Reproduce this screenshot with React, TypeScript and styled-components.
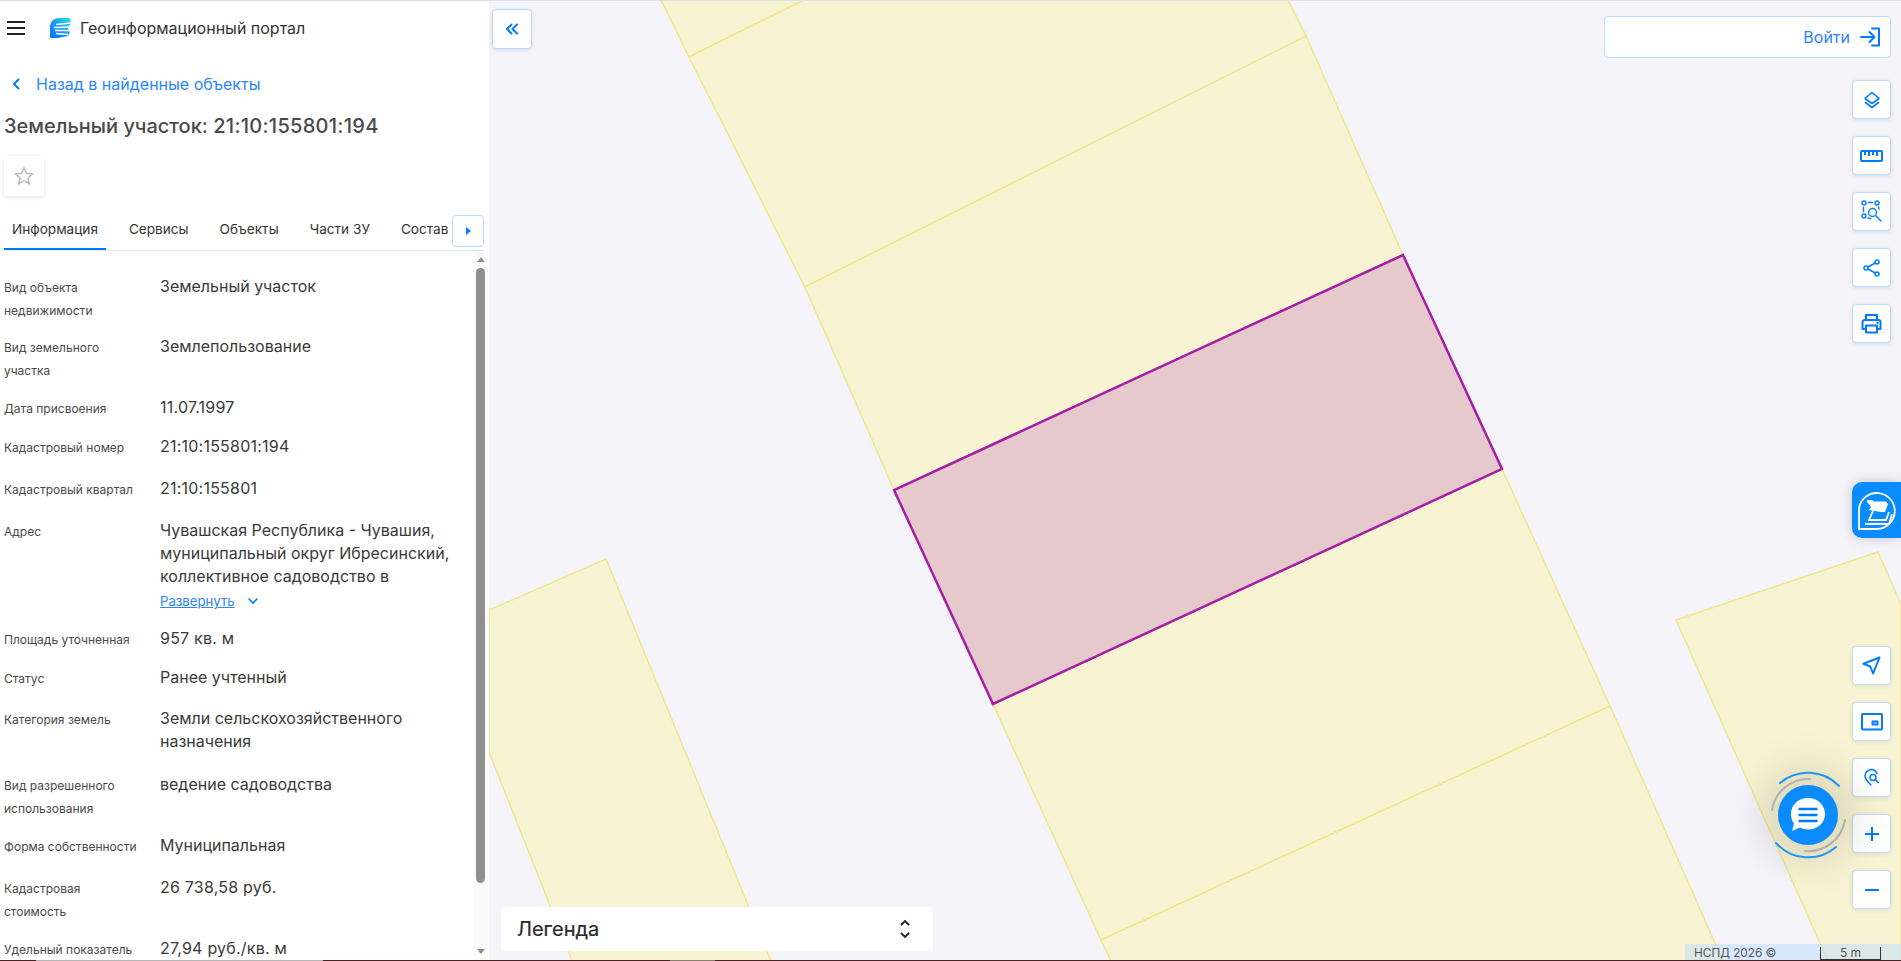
import React from "react";
import styled, { createGlobalStyle } from "styled-components";

const BLUE = "#007bff";

const GlobalStyle = createGlobalStyle`
  html, body, #root {
    margin: 0;
    height: 100%;
  }
  body {
    font-family: Inter, "Noto Sans", sans-serif;
    background: #f5f4fb;
    overflow: hidden;
  }
`;

const Page = styled.div`
  position: relative;
  display: flex;
  width: 1901px;
  height: 961px;
  border-top: 1px solid #dfdfe6;
  box-sizing: border-box;
  overflow: hidden;
`;

const BottomEdge = styled.div`
  position: absolute;
  left: 0;
  right: 0;
  bottom: 0;
  height: 1px;
  z-index: 5;
  background: linear-gradient(
    to right,
    #4a2020 0 36px,
    #b5b5b5 36px 323px,
    #4a2020 323px 670px,
    #8b7d70 670px 715px,
    #4a2020 715px
  );
`;

const Panel = styled.aside`
  width: 489px;
  flex: none;
  display: flex;
  flex-direction: column;
  background: #fff;
`;

const Header = styled.header`
  display: flex;
  align-items: center;
  height: 54px;
  padding: 0 0 0 7px;
  flex: none;
`;

const Burger = styled.div`
  width: 18px;
  height: 14px;
  border-top: 2px solid #222;
  border-bottom: 2px solid #222;
  position: relative;
  box-sizing: border-box;
  margin-right: 24px;
  &::after {
    content: "";
    position: absolute;
    left: 0;
    right: 0;
    top: 4px;
    height: 2px;
    background: #222;
  }
`;

const PortalName = styled.span`
  margin-left: 8px;
  font-size: 16px;
  color: #333;
`;

const BackLink = styled.a`
  display: flex;
  align-items: center;
  height: 20px;
  margin: 19px 0 0 12px;
  gap: 16px;
  font-size: 16px;
  color: #2b85ff;
`;

const Title = styled.h1`
  margin: 20px 0 0 4px;
  font-size: 20px;
  line-height: 24px;
  font-weight: 500;
  color: #4a4a4a;
  white-space: nowrap;
`;

const TitleNumber = styled.span`
  letter-spacing: 0.28px;
`;

const StarButton = styled.div`
  width: 40px;
  height: 40px;
  margin: 18px 0 0 4px;
  display: flex;
  align-items: center;
  justify-content: center;
  border-radius: 4px;
  box-shadow: 0 1px 5px rgba(0, 0, 0, 0.1);
`;

const Tabs = styled.nav`
  position: relative;
  flex: none;
  display: flex;
  gap: 15px;
  height: 40px;
  margin: 14px 5px 0 4px;
  border-bottom: 1px solid #e6e6ea;
`;

const Tab = styled.div<{ $active?: boolean }>`
  flex: none;
  height: 40px;
  box-sizing: border-box;
  padding: 10px 8px 0;
  font-size: 13.6px;
  line-height: 18px;
  color: #333;
  white-space: nowrap;
  border-bottom: 2px solid ${({ $active }) => ($active ? BLUE : "transparent")};
`;

const TabArrow = styled.div`
  position: absolute;
  right: 0;
  top: 5px;
  width: 32px;
  height: 32px;
  box-sizing: border-box;
  display: flex;
  align-items: center;
  justify-content: center;
  background: #fff;
  border: 1px solid #bcdcff;
  border-radius: 4px;
`;

const TabArrowGlyph = styled.div`
  width: 0;
  height: 0;
  border-left: 5px solid ${BLUE};
  border-top: 4px solid transparent;
  border-bottom: 4px solid transparent;
`;

const Body = styled.div`
  flex: 1;
  min-height: 0;
  display: flex;
`;

const List = styled.div`
  flex: 1;
  min-width: 0;
  overflow: hidden;
  padding: 26px 0 0 4px;
`;

const Row = styled.div<{ $h: number }>`
  display: grid;
  grid-template-columns: 156px 1fr;
  height: ${({ $h }) => $h}px;
`;

const Label = styled.div`
  max-width: 133px;
  font-size: 12px;
  line-height: 22.5px;
  color: #4a4a4a;
`;

const Value = styled.div<{ $num?: boolean }>`
  margin-top: -2px;
  padding-right: 16px;
  font-size: 16px;
  line-height: 23px;
  letter-spacing: ${({ $num }) => ($num ? "0.22px" : "normal")};
  color: #3a3a3a;
`;

const Expand = styled.div`
  display: flex;
  align-items: center;
  gap: 13px;
  margin-top: 3px;
`;

const ExpandLink = styled.a`
  font-size: 13.2px;
  line-height: 20px;
  color: #2b85ff;
  text-decoration: underline;
`;

const ScrollTrack = styled.div`
  width: 15px;
  margin-right: 1px;
  flex: none;
  display: flex;
  flex-direction: column;
  align-items: center;
  background: #fafafa;
`;

const ScrollArrow = styled.div<{ $down?: boolean }>`
  flex: none;
  width: 0;
  height: 0;
  margin: ${({ $down }) => ($down ? "0 0 7px" : "6px 0 6px")};
  border-left: 4.5px solid transparent;
  border-right: 4.5px solid transparent;
  ${({ $down }) =>
    $down ? "border-top: 5px solid #8f8f8f;" : "border-bottom: 5px solid #8f8f8f;"}
`;

const ScrollThumb = styled.div`
  width: 9px;
  height: 615px;
  flex: none;
  border-radius: 5px;
  background: #8f8f8f;
`;

const ScrollSpacer = styled.div`
  flex: 1;
`;

const MapArea = styled.main`
  position: relative;
  flex: 1;
  background: #f5f4fb;
`;

const MapCanvas = styled.svg`
  position: absolute;
  left: 0;
  top: -1px;
  width: 1412px;
  height: 961px;
`;

const IconButton = styled.button`
  width: 39px;
  height: 39px;
  padding: 0;
  flex: none;
  display: flex;
  align-items: center;
  justify-content: center;
  background: #fff;
  border: 1px solid #bcdcff;
  border-radius: 4px;
  box-shadow: 0 1px 4px rgba(0, 0, 0, 0.1);
`;

const CollapseButton = styled(IconButton)`
  position: absolute;
  left: 3px;
  top: 8px;
  width: 40px;
  height: 40px;
`;

const LoginButton = styled.button`
  position: absolute;
  right: 10px;
  top: 15px;
  width: 287px;
  height: 42px;
  display: flex;
  align-items: center;
  justify-content: flex-end;
  gap: 10px;
  padding: 0 9px 0 0;
  background: #fff;
  border: 1px solid #bcdcff;
  border-radius: 4px;
  font-family: inherit;
  font-size: 16px;
  color: #2b85ff;
`;

const ToolColumn = styled.div<{ $top: number }>`
  position: absolute;
  right: 10px;
  top: ${({ $top }) => $top}px;
  display: flex;
  flex-direction: column;
  gap: 17px;
`;

const SideTab = styled.div`
  position: absolute;
  right: 0;
  top: 481px;
  width: 49px;
  height: 56px;
  display: flex;
  align-items: center;
  padding-left: 6px;
  box-sizing: border-box;
  background: #0a8cff;
  border-radius: 10px 0 0 10px;
  box-shadow: 0 0 14px rgba(0, 0, 0, 0.18);
`;

const ChatBubble = styled.div`
  position: absolute;
  left: 1289px;
  top: 784px;
  width: 60px;
  height: 60px;
  display: flex;
  align-items: center;
  justify-content: center;
  border-radius: 50%;
  background: #0a8cff;
  box-shadow: 0 0 45px 14px rgba(0, 0, 0, 0.14);
`;

const ChatRings = styled.svg`
  position: absolute;
  left: 1269px;
  top: 764px;
  width: 100px;
  height: 100px;
`;

const Legend = styled.div`
  position: absolute;
  left: 12px;
  top: 906px;
  width: 432px;
  height: 44px;
  box-sizing: border-box;
  padding: 0 16px;
  display: flex;
  align-items: center;
  justify-content: space-between;
  background: #fff;
  border-radius: 4px;
  font-size: 20px;
  color: #2a2a2a;
  -webkit-text-stroke: 0.2px #2a2a2a;
`;

const LegendToggle = styled.svg`
  margin-right: 6px;
`;

const Attribution = styled.div`
  position: absolute;
  right: 0;
  bottom: 0;
  width: 216px;
  height: 17px;
  padding-left: 9px;
  box-sizing: border-box;
  display: flex;
  align-items: center;
  background: rgba(190, 222, 255, 0.5);
  font-size: 11.8px;
  color: #555;
`;

const ScaleBar = styled.div`
  position: absolute;
  left: 135px;
  bottom: 1px;
  width: 61px;
  height: 13px;
  box-sizing: border-box;
  border: 1px solid #333;
  border-top: none;
  text-align: center;
  font-size: 12px;
  line-height: 11px;
  color: #555;
`;

const strokeIcon = {
  fill: "none",
  stroke: BLUE,
  strokeWidth: 2,
  strokeLinecap: "round",
  strokeLinejoin: "round",
} as const;

const Logo = () => (
  <svg width="23" height="21" viewBox="0 0 23 21">
    <defs>
      <linearGradient id="logoFill" x1="0" y1="1" x2="1" y2="0">
        <stop offset="0" stopColor="#0a6cff" />
        <stop offset="0.5" stopColor="#1a9cf5" />
        <stop offset="1" stopColor="#2ae6e0" />
      </linearGradient>
    </defs>
    <path d="M21 0H11C4 0 1 4 1 10V20H9L19 18L21 14L19 10L22 5Z" fill="url(#logoFill)" />
    <path d="M7 6.500L22 5M5 9.500L21 9M6 12.500L21 12.500M7 15.500L19 16.500" stroke="#fff" strokeWidth="1.300" fill="none" />
  </svg>
);

const Chevron = () => (
  <svg width="8" height="12" viewBox="0 0 8 12">
    <path d="M6.500 1.500L2 6l4.500 4.500" fill="none" stroke={BLUE} strokeWidth="2" strokeLinecap="round" />
  </svg>
);

const Star = () => (
  <svg width="20" height="20" viewBox="0 0 20 20">
    <path
      d="M10 1.800l2.500 5.400 5.900.7-4.400 4 1.200 5.800L10 14.800l-5.200 2.900L6 11.900l-4.400-4 5.900-.7z"
      fill="none"
      stroke="#bdbdbd"
      strokeWidth="1.500"
    />
  </svg>
);

const LoginIcon = () => (
  <svg width="21" height="20" viewBox="0 0 21 20" {...strokeIcon}>
    <path d="M12 1.500h7v17h-7" />
    <path d="M1 10h13M9.500 5l5 5-5 5" />
  </svg>
);

const LayersIcon = () => (
  <svg width="18" height="18" viewBox="0 0 18 18" {...strokeIcon} strokeWidth={1.6}>
    <path d="M9 1.500L16 7.500 9 12.500 2 7.500z" />
    <path d="M2.500 11.500L9 16.500l6.500-5" />
  </svg>
);

const RulerIcon = () => (
  <svg width="24" height="14" viewBox="0 0 24 14" {...strokeIcon} strokeLinecap="butt">
    <rect x="1" y="2" width="21" height="10" rx="1" />
    <path d="M5 2v4M9 2v5M13 2v4M17 2v5" />
  </svg>
);

const AreaSearchIcon = () => (
  <svg width="22" height="23" viewBox="0 0 22 23" {...strokeIcon} strokeWidth={1.4}>
    <circle cx="3" cy="3" r="2" />
    <circle cx="16" cy="3" r="2" />
    <circle cx="3" cy="16" r="2" />
    <path d="M7.500 2.500h4M2.500 7.500v4M7 18l2.500.5M17.500 7l.5 2" />
    <circle cx="11.500" cy="12.500" r="4" />
    <path d="M15 16l5 5" />
  </svg>
);

const ShareIcon = () => (
  <svg width="18" height="18" viewBox="0 0 18 18" {...strokeIcon} strokeWidth={1.5}>
    <circle cx="14" cy="3" r="2" />
    <circle cx="3" cy="9" r="2" />
    <circle cx="14" cy="15" r="2" />
    <path d="M5 8l7.200-4M5 10l7.200 4" />
  </svg>
);

const PrinterIcon = () => (
  <svg width="21" height="20" viewBox="0 0 21 20" {...strokeIcon} strokeLinecap="butt">
    <path d="M5 6V1h11v5" />
    <path d="M5 15H1.500V8a2 2 0 0 1 2-2h14a2 2 0 0 1 2 2v7H16" />
    <rect x="5" y="11.500" width="11" height="7" />
    <path d="M15.500 8.800h2" />
  </svg>
);

const NavigateIcon = () => (
  <svg width="19" height="19" viewBox="0 0 19 19" {...strokeIcon}>
    <path d="M17.500 1.500L1.500 7.800l6.800 2.700 2.800 7z" />
  </svg>
);

const PipIcon = () => (
  <svg width="22" height="18" viewBox="0 0 22 18" {...strokeIcon} strokeLinecap="butt">
    <rect x="1" y="1" width="20" height="15.500" rx="1" />
    <rect x="11.500" y="8.500" width="5" height="3" />
  </svg>
);

const PinSearchIcon = () => (
  <svg width="18" height="20" viewBox="0 0 18 20" {...strokeIcon} strokeWidth={1.5}>
    <path d="M8 1.500A6.500 6.500 0 0 0 2 8c0 3.500 3 6 6 9" />
    <path d="M8 1.500c3 0 5 1.500 6 4" />
    <circle cx="10" cy="9.500" r="3" />
    <path d="M12.200 11.800l3 2.600" />
  </svg>
);

const PlusIcon = () => (
  <svg width="16" height="16" viewBox="0 0 16 16" {...strokeIcon} strokeLinecap="butt">
    <path d="M8 1v14M1 8h14" />
  </svg>
);

const MinusIcon = () => (
  <svg width="16" height="4" viewBox="0 0 16 4" {...strokeIcon} strokeLinecap="butt">
    <path d="M1 2h14" />
  </svg>
);

const CollapseIcon = () => (
  <svg width="14" height="12" viewBox="0 0 14 12" {...strokeIcon}>
    <path d="M6.500 1.500L2 6l4.500 4.500M12 1.500L7.500 6l4.500 4.500" />
  </svg>
);

const BookIcon = () => (
  <svg width="38" height="42" viewBox="0 0 38 42" fill="none" stroke="#fff" strokeWidth="1.800">
    <path d="M1 40V19A18 18 0 1 1 19 40z" />
    <path d="M9 11l5 0 2 1.500h12l2 2.500-3 8-4 0-12-2 2-3-2-3-2-2z" fill="#fff" stroke="none" />
    <path d="M15 22l-4 9h17l3-8" />
    <path d="M7 35h24l3-10" />
  </svg>
);

const ChatIcon = () => (
  <svg width="36" height="36" viewBox="0 0 36 36">
    <path
      d="M18 1C8 1 1 8 1 17c0 4 1 7 3 9.500L2 34l8-3.500c2.500 1 5 2 8 2 10 0 17-7 17-15.500S28 1 18 1z"
      fill="#fff"
    />
    <path d="M8.500 12h19M8.500 18h19M8.500 24h19" stroke={BLUE} strokeWidth="2.500" />
  </svg>
);

const LegendIcon = () => (
  <LegendToggle width="12" height="20" viewBox="0 0 12 20" fill="none" stroke="#222" strokeWidth="1.800">
    <path d="M2 6l4-4 4 4M2 14l4 4 4-4" />
  </LegendToggle>
);

const SmallDown = () => (
  <svg width="10" height="7" viewBox="0 0 10 7">
    <path d="M1 1l4 4 4-4" fill="none" stroke={BLUE} strokeWidth="1.600" strokeLinecap="round" />
  </svg>
);

const PARCELS = [
  "661,0 804,0 689,57",
  "689,57 804,0 1288,0 1306,36 805,287",
  "805,287 1306,36 1403,255 894,490",
  "993,704 1502,469 1610,706 1101,940",
  "1101,940 1610,706 1723,961 1111,961",
  "489,610 606,559 771,961 572,961 489,752",
  "1676,620 1878,552 1901,604 1901,961 1828,961",
];

type InfoItem = { label: string; value: string; h: number; num?: boolean };

const INFO_ROWS: InfoItem[] = [
  { label: "Вид объекта недвижимости", value: "Земельный участок", h: 60 },
  { label: "Вид земельного участка", value: "Землепользование", h: 61 },
  { label: "Дата присвоения", value: "11.07.1997", h: 39, num: true },
  { label: "Кадастровый номер", value: "21:10:155801:194", h: 42, num: true },
  { label: "Кадастровый квартал", value: "21:10:155801", h: 42, num: true },
];

const MORE_ROWS: InfoItem[] = [
  { label: "Площадь уточненная", value: "957 кв. м", h: 39, num: true },
  { label: "Статус", value: "Ранее учтенный", h: 41 },
  { label: "Категория земель", value: "Земли сельскохозяйственного назначения", h: 66 },
  { label: "Вид разрешенного использования", value: "ведение садоводства", h: 61 },
  { label: "Форма собственности", value: "Муниципальная", h: 42 },
  { label: "Кадастровая стоимость", value: "26 738,58 руб.", h: 61, num: true },
  { label: "Удельный показатель", value: "27,94 руб./кв. м", h: 40, num: true },
];

const TOP_TOOLS = [LayersIcon, RulerIcon, AreaSearchIcon, ShareIcon, PrinterIcon];
const BOTTOM_TOOLS = [NavigateIcon, PipIcon, PinSearchIcon, PlusIcon, MinusIcon];

const InfoRow = ({ label, value, h, num }: InfoItem) => (
  <Row $h={h}>
    <Label>{label}</Label>
    <Value $num={num}>{value}</Value>
  </Row>
);

export default function App() {
  return (
    <>
      <GlobalStyle />
      <Page>
        <Panel>
          <Header>
            <Burger />
            <Logo />
            <PortalName>Геоинформационный портал</PortalName>
          </Header>
          <BackLink>
            <Chevron />
            Назад в найденные объекты
          </BackLink>
          <Title>
            Земельный участок: <TitleNumber>21:10:155801:194</TitleNumber>
          </Title>
          <StarButton>
            <Star />
          </StarButton>
          <Tabs>
            <Tab $active>Информация</Tab>
            <Tab>Сервисы</Tab>
            <Tab>Объекты</Tab>
            <Tab>Части ЗУ</Tab>
            <Tab>Состав</Tab>
            <TabArrow>
              <TabArrowGlyph />
            </TabArrow>
          </Tabs>
          <Body>
            <List>
              {INFO_ROWS.map(row => (
                <InfoRow key={row.label} {...row} />
              ))}
              <Row $h={108}>
                <Label>Адрес</Label>
                <Value>
                  Чувашская Республика - Чувашия, муниципальный округ Ибресинский, коллективное садоводство в
                  <Expand>
                    <ExpandLink>Развернуть</ExpandLink>
                    <SmallDown />
                  </Expand>
                </Value>
              </Row>
              {MORE_ROWS.map(row => (
                <InfoRow key={row.label} {...row} />
              ))}
            </List>
            <ScrollTrack>
              <ScrollArrow />
              <ScrollThumb />
              <ScrollSpacer />
              <ScrollArrow $down />
            </ScrollTrack>
          </Body>
        </Panel>
        <MapArea>
          <MapCanvas viewBox="489 0 1412 961">
            {PARCELS.map(points => (
              <polygon key={points} points={points} fill="#f8f3d2" stroke="#f0e68c" strokeWidth="1.500" />
            ))}
            <polygon points="1403,255 1502,469 993,704 894,490" fill="#e6c9cd" stroke="#a51fa5" strokeWidth="2.500" />
          </MapCanvas>
          <CollapseButton>
            <CollapseIcon />
          </CollapseButton>
          <LoginButton>
            Войти
            <LoginIcon />
          </LoginButton>
          <ToolColumn $top={79}>
            {TOP_TOOLS.map((Icon, i) => (
              <IconButton key={i}>
                <Icon />
              </IconButton>
            ))}
          </ToolColumn>
          <SideTab>
            <BookIcon />
          </SideTab>
          <ToolColumn $top={645}>
            {BOTTOM_TOOLS.map((Icon, i) => (
              <IconButton key={i}>
                <Icon />
              </IconButton>
            ))}
          </ToolColumn>
          <ChatBubble>
            <ChatIcon />
          </ChatBubble>
          <ChatRings viewBox="0 0 100 100" fill="none" strokeWidth="2" strokeLinecap="round">
            <path d="M22 18A43 43 0 0 1 81 21M18 78A43 43 0 0 0 78 82" stroke="#1e96f5" />
            <path d="M14 45A37 37 0 0 1 52 14M87 55A37 37 0 0 1 47 86" stroke="#b0b0b0" />
          </ChatRings>
          <Legend>
            Легенда
            <LegendIcon />
          </Legend>
          <Attribution>
            НСПД 2026 ©
            <ScaleBar>5 m</ScaleBar>
          </Attribution>
        </MapArea>
        <BottomEdge />
      </Page>
    </>
  );
}
